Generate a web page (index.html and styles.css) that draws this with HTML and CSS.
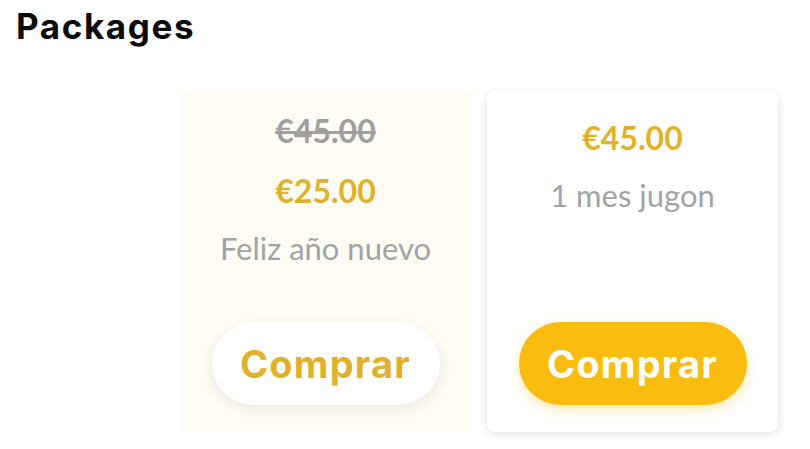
FILE: index.html
```html
<!DOCTYPE html>
<html lang="es">

<head>
    <meta charset="UTF-8">
    <meta name="viewport" content="width=device-width, initial-scale=1.0">
    <title>Packages</title>
    <link rel="stylesheet" href="styles.css">
</head>

<body>
    <h1>Packages</h1>

    <div class="packages">
        <div class="package promo">
            <p class="old-price">€45.00</p>
            <p class="price">€25.00</p>
            <p class="name">Feliz año nuevo</p>
            <button class="buy-btn">Comprar</button>
        </div>

        <div class="package">
            <p class="price">€45.00</p>
            <p class="name">1 mes jugon</p>
            <button class="buy-btn">Comprar</button>
        </div>
    </div>
</body>

</html>
```

FILE: styles.css
```css
* {
    margin: 0;
    padding: 0;
    box-sizing: border-box;
}

body {
    font-family: 'Lato', 'Noto Sans', sans-serif;
    background-color: #fff;
    color: #111;
    width: 810px;
    height: 449px;
    overflow: hidden;
}

h1 {
    font-family: 'Inter', 'DejaVu Sans', sans-serif;
    font-weight: 700;
    font-size: 35px;
    letter-spacing: 1.6px;
    line-height: 40px;
    padding: 6px 0 0 16px;
    color: #0b0b0b;
}

.packages {
    display: flex;
    justify-content: flex-end;
    gap: 16px;
    padding: 45px 32px 0 0;
}

.package {
    width: 291px;
    height: 341px;
    border-radius: 8px;
    background-color: #fff;
    box-shadow: 0 2px 8px rgba(0, 0, 0, 0.13);
    display: flex;
    flex-direction: column;
    align-items: center;
    padding: 29px 0 27px;
}

.package.promo {
    background-color: #fffcf3;
    box-shadow: none;
    padding-top: 22px;
}

.old-price {
    font-size: 32px;
    line-height: 36px;
    font-weight: 700;
    color: #a0a0a0;
    text-decoration: line-through;
    margin-bottom: 24px;
}

.price {
    font-size: 32px;
    line-height: 36px;
    font-weight: 700;
    color: #e0b22c;
    margin-bottom: 21px;
}

.name {
    font-size: 31px;
    line-height: 36px;
    color: #a3a3a3;
}

.buy-btn {
    margin-top: auto;
    width: 228px;
    height: 83px;
    border: none;
    border-radius: 42px;
    font-family: 'Inter', 'DejaVu Sans', sans-serif;
    font-weight: 700;
    font-size: 38px;
    letter-spacing: 1.2px;
    color: #fff;
    background-color: #fbbc10;
    box-shadow: 0 4px 12px rgba(251, 188, 16, 0.35);
    cursor: pointer;
}

.promo .buy-btn {
    background-color: #fff;
    color: #e0b22c;
    box-shadow: 0 4px 14px rgba(0, 0, 0, 0.08);
}
```
